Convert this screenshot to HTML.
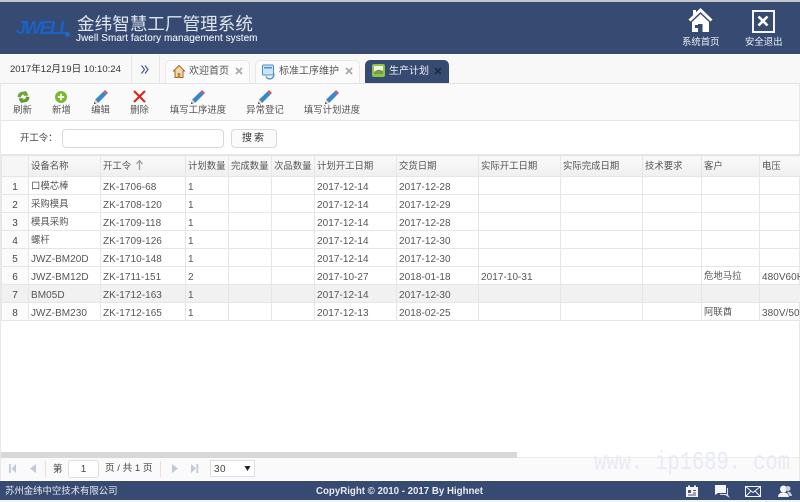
<!DOCTYPE html>
<html lang="zh"><head><meta charset="utf-8"><title>金纬智慧工厂管理系统</title>
<style>
html,body{margin:0;padding:0;background:#fff}
body{width:800px;height:502px;overflow:hidden;position:relative;font-family:"Liberation Sans","Noto Sans CJK SC",sans-serif;font-size:10px;color:#444}
#w{position:absolute;left:0;top:0;width:800px;height:502px;overflow:hidden;filter:blur(.35px)}
.a{position:absolute;white-space:nowrap}
svg{position:absolute;overflow:visible}
table{position:absolute;left:1px;top:155px;width:799px;border-collapse:collapse;table-layout:fixed}
td,th{border:1px solid #e6e6e6;height:15px;padding:2px 0 0 2px;font-weight:normal;font-size:10px;line-height:13px;vertical-align:top;text-align:left;white-space:nowrap;overflow:hidden;color:#555;letter-spacing:.05px}
td::before,th::before{content:"\200b";font-family:"Noto Sans CJK SC",sans-serif}
th{height:17px;padding-top:3px;background:linear-gradient(#fafafa,#efefef);font-size:9.4px;letter-spacing:0}
td.c{font-size:9.4px;letter-spacing:0}
td:first-child{text-align:center;background:#fbfbfb;padding:2px 0 0 0;font-size:10px;color:#444}
th:first-child{background:#f6f6f6}
tr.s td{background:#f1f1f1}
.tb{position:absolute;top:103px;color:#555;font-size:9.4px;line-height:14px;white-space:nowrap;transform:translateX(-50%)}
.tab{position:absolute;top:60px;height:23px;border:1px solid #e8e8e8;border-bottom:0;border-radius:5px 5px 0 0;background:#fbfbfb;box-sizing:border-box}
</style></head><body><div id="w">
<!-- header -->
<div class="a" style="left:0;top:0;width:800px;height:2px;background:#c4c6cb"></div>
<div class="a" style="left:0;top:2px;width:800px;height:52px;background:#364a72"></div>
<div class="a" style="left:16px;top:18px;font:italic bold 18px 'Liberation Sans',sans-serif;color:#1a62c4;letter-spacing:-1.7px">JWELL</div>
<div class="a" style="left:65px;top:32px;width:5px;height:5px;border-radius:50%;background:#2368b8"></div>
<div class="a" style="left:77px;top:13px;font-size:17.6px;line-height:22px;color:#dfe4ee;font-family:'WenQuanYi Zen Hei','Noto Sans CJK SC',sans-serif">金纬智慧工厂管理系统</div>
<div class="a" style="left:76px;top:33px;font-size:10px;line-height:12px;color:#eceff4;letter-spacing:.04px;-webkit-text-stroke:.1px #eceff4">Jwell Smart factory management system</div>
<svg style="left:688px;top:8px" width="25" height="25" viewBox="0 0 25 25"><path d="M12.5 0 L24.5 11.5 L22.5 13.5 L12.5 4 L2.5 13.5 L.5 11.5 L5 7.2 V2 H8 V4.3 Z" fill="#fff"/><path d="M4 14 L12.5 6 L21 14 V24 H14.5 V16 H10 V24 H4 Z M7 17 H10 V20 H7 Z" fill="#fff" fill-rule="evenodd"/></svg>
<div class="a" style="left:682px;top:35px;font-size:9.4px;line-height:13px;color:#eef0f5">系统首页</div>
<div class="a" style="left:752px;top:10px;width:19px;height:19px;border:2px solid #f4f5f8"></div>
<svg style="left:756px;top:14px" width="15" height="15" viewBox="0 0 15 15"><path d="M2.5 2.5 L11.5 11.5 M11.5 2.5 L2.5 11.5" stroke="#fff" stroke-width="2.6"/></svg>
<div class="a" style="left:745px;top:35px;font-size:9.4px;line-height:13px;color:#eef0f5">安全退出</div>
<!-- tab bar -->
<div class="a" style="left:0;top:55px;width:800px;height:28px;background:#f8f8f8"></div>
<div class="a" style="left:0;top:83px;width:800px;height:1px;background:#e4e4e4"></div>
<div class="a" style="left:131px;top:55px;width:1px;height:28px;background:#e6e6e6"></div>
<div class="a" style="left:159px;top:55px;width:1px;height:28px;background:#e6e6e6"></div>
<div class="a" style="left:10px;top:63px;font-size:9.55px;line-height:14px;color:#333">2017年12月19日 10:10:24</div>
<svg style="left:141px;top:65px" width="8" height="9" viewBox="0 0 8 9"><path d="M.5 .5 L3.5 4.5 L.5 8.5 M4 .5 L7 4.5 L4 8.5" fill="none" stroke="#3a5684" stroke-width="1.1"/></svg>
<div class="tab" style="left:165px;width:85px"></div>
<svg style="left:173px;top:65px" width="12" height="13" viewBox="0 0 12 13"><path d="M6 .5 L.5 6 L2 6 V12.5 H10 V6 H11.5 Z" fill="#eed9a8" stroke="#a5642c" stroke-width="1"/><path d="M4.7 12.5 V8 H7.3 V12.5" fill="#c8813c"/></svg>
<div class="a" style="left:189px;top:65px;font-size:10px;line-height:14px;color:#555">欢迎首页</div>
<svg style="left:235px;top:67px" width="8" height="8" viewBox="0 0 8 8"><path d="M1 1 L7 7 M7 1 L1 7" stroke="#a9a9a9" stroke-width="1.7"/></svg>
<div class="tab" style="left:255px;width:105px"></div>
<svg style="left:262px;top:64px" width="13" height="14" viewBox="0 0 13 14"><rect x=".5" y="1" width="11" height="10" rx="1" fill="#cfe3f5" stroke="#4a90d0"/><rect x="2" y="3" width="8" height="1.5" fill="#4a90d0"/><path d="M4 12.5 A4 4 0 0 0 11.5 9" fill="none" stroke="#4a90d0" stroke-width="1.4"/></svg>
<div class="a" style="left:279px;top:65px;font-size:10px;line-height:14px;color:#555">标准工序维护</div>
<svg style="left:345px;top:67px" width="8" height="8" viewBox="0 0 8 8"><path d="M1 1 L7 7 M7 1 L1 7" stroke="#a9a9a9" stroke-width="1.7"/></svg>
<div class="a" style="left:365px;top:60px;width:84px;height:23px;background:#364a72;border-radius:5px 5px 0 0"></div>
<svg style="left:372px;top:64px" width="13" height="13" viewBox="0 0 13 13"><rect x="0" y="0" width="13" height="13" rx="2" fill="#8cc63f"/><rect x="2" y="2" width="9" height="8" fill="#f3f3e3"/><path d="M2 8 Q6 4 11 7 V10 H2 Z" fill="#7a9a4a"/></svg>
<div class="a" style="left:389px;top:65px;font-size:10px;line-height:14px;color:#eef0f5">生产计划</div>
<svg style="left:434px;top:67px" width="8" height="8" viewBox="0 0 8 8"><path d="M1 1 L7 7 M7 1 L1 7" stroke="#1f2c45" stroke-width="1.7"/></svg>
<!-- toolbar -->
<div class="a" style="left:1px;top:84px;width:798px;height:36px;background:#fafafa"></div>
<div class="a" style="left:0;top:120px;width:800px;height:1px;background:#e6e6e6"></div>
<div class="a" style="left:0;top:84px;width:1px;height:400px;background:#e8e8e8"></div>
<div class="a" style="left:799px;top:84px;width:1px;height:400px;background:#e8e8e8"></div>
<svg style="left:17px;top:91px" width="13" height="12" viewBox="0 0 13 12"><path d="M.5 6 Q1 .5 7 .5 L9 0 L11.5 4.5 L6.5 5 L7.5 3.5 Q4 3.5 4 6.5 Z" fill="#6da53a"/><path d="M12.5 6 Q12 11.5 6 11.5 L4 12 L1.5 7.5 L6.5 7 L5.5 8.5 Q9 8.5 9 5.5 Z" fill="#5b9a2e"/></svg>
<div class="tb" style="left:22.5px">刷新</div>
<svg style="left:55px;top:91px" width="12" height="12" viewBox="0 0 12 12"><circle cx="6" cy="6" r="6" fill="#7ab82e"/><path d="M6 2.8 V9.2 M2.8 6 H9.2" stroke="#fff" stroke-width="1.8"/></svg>
<div class="tb" style="left:61.5px">新增</div>
<svg style="left:94px;top:90px" width="14" height="14" viewBox="0 0 14 14"><path d="M0 14 L1.2 9.5 L9.5 1.5 L12.5 4.5 L4.4 12.7 Z" fill="#3b86d0"/><path d="M0 14 L1.2 9.5 L4.4 12.7 Z" fill="#ecd7ae"/><path d="M0 14 L.5 12 L2 13.5 Z" fill="#333"/><path d="M9.5 1.5 L11 0 L14 3 L12.5 4.5 Z" fill="#d9534f"/></svg>
<div class="tb" style="left:100.5px">编辑</div>
<svg style="left:133px;top:90px" width="13" height="13" viewBox="0 0 13 13"><path d="M1 1 L12 12 M12 1 L1 12" stroke="#d62a20" stroke-width="2.2"/></svg>
<div class="tb" style="left:139.5px">删除</div>
<svg style="left:191px;top:90px" width="14" height="14" viewBox="0 0 14 14"><path d="M0 14 L1.2 9.5 L9.5 1.5 L12.5 4.5 L4.4 12.7 Z" fill="#3b86d0"/><path d="M0 14 L1.2 9.5 L4.4 12.7 Z" fill="#ecd7ae"/><path d="M0 14 L.5 12 L2 13.5 Z" fill="#333"/><path d="M9.5 1.5 L11 0 L14 3 L12.5 4.5 Z" fill="#d9534f"/></svg>
<div class="tb" style="left:198px">填写工序进度</div>
<svg style="left:258px;top:90px" width="14" height="14" viewBox="0 0 14 14"><path d="M0 14 L1.2 9.5 L9.5 1.5 L12.5 4.5 L4.4 12.7 Z" fill="#3b86d0"/><path d="M0 14 L1.2 9.5 L4.4 12.7 Z" fill="#ecd7ae"/><path d="M0 14 L.5 12 L2 13.5 Z" fill="#333"/><path d="M9.5 1.5 L11 0 L14 3 L12.5 4.5 Z" fill="#d9534f"/></svg>
<div class="tb" style="left:265px">异常登记</div>
<svg style="left:325px;top:90px" width="14" height="14" viewBox="0 0 14 14"><path d="M0 14 L1.2 9.5 L9.5 1.5 L12.5 4.5 L4.4 12.7 Z" fill="#3b86d0"/><path d="M0 14 L1.2 9.5 L4.4 12.7 Z" fill="#ecd7ae"/><path d="M0 14 L.5 12 L2 13.5 Z" fill="#333"/><path d="M9.5 1.5 L11 0 L14 3 L12.5 4.5 Z" fill="#d9534f"/></svg>
<div class="tb" style="left:332px">填写计划进度</div>
<!-- search -->
<div class="a" style="left:20px;top:131px;font-size:9.4px;line-height:14px;color:#444">开工令：</div>
<div class="a" style="left:62px;top:129px;width:162px;height:19px;box-sizing:border-box;border:1px solid #d8d8d8;border-radius:4px;background:#fff"></div>
<div class="a" style="left:231px;top:129px;width:46px;height:19px;box-sizing:border-box;border:1px solid #d8d8d8;border-radius:4px;background:#fbfbfb;text-align:center;font-size:10px;line-height:17px;letter-spacing:2px;color:#333">搜索</div>
<!-- grid -->
<div class="a" style="left:0;top:154px;width:800px;height:1px;background:#e6e6e6"></div>
<table>
<colgroup><col style="width:27px"><col style="width:72px"><col style="width:85px"><col style="width:43px"><col style="width:43px"><col style="width:43px"><col style="width:82px"><col style="width:82px"><col style="width:82px"><col style="width:82px"><col style="width:59px"><col style="width:58px"><col style="width:41px"></colgroup>
<tr><th></th><th>设备名称</th><th>开工令</th><th>计划数量</th><th>完成数量</th><th>次品数量</th><th>计划开工日期</th><th>交货日期</th><th>实际开工日期</th><th>实际完成日期</th><th>技术要求</th><th>客户</th><th>电压</th></tr>
<tr><td>1</td><td class="c">口模芯棒</td><td>ZK-1706-68</td><td>1</td><td></td><td></td><td>2017-12-14</td><td>2017-12-28</td><td></td><td></td><td></td><td></td><td></td></tr>
<tr><td>2</td><td class="c">采购模具</td><td>ZK-1708-120</td><td>1</td><td></td><td></td><td>2017-12-14</td><td>2017-12-29</td><td></td><td></td><td></td><td></td><td></td></tr>
<tr><td>3</td><td class="c">模具采购</td><td>ZK-1709-118</td><td>1</td><td></td><td></td><td>2017-12-14</td><td>2017-12-28</td><td></td><td></td><td></td><td></td><td></td></tr>
<tr><td>4</td><td class="c">螺杆</td><td>ZK-1709-126</td><td>1</td><td></td><td></td><td>2017-12-14</td><td>2017-12-30</td><td></td><td></td><td></td><td></td><td></td></tr>
<tr><td>5</td><td>JWZ-BM20D</td><td>ZK-1710-148</td><td>1</td><td></td><td></td><td>2017-12-14</td><td>2017-12-30</td><td></td><td></td><td></td><td></td><td></td></tr>
<tr><td>6</td><td>JWZ-BM12D</td><td>ZK-1711-151</td><td>2</td><td></td><td></td><td>2017-10-27</td><td>2018-01-18</td><td>2017-10-31</td><td></td><td></td><td class="c">危地马拉</td><td>480V60HZ</td></tr>
<tr class="s"><td>7</td><td>BM05D</td><td>ZK-1712-163</td><td>1</td><td></td><td></td><td>2017-12-14</td><td>2017-12-30</td><td></td><td></td><td></td><td></td><td></td></tr>
<tr><td>8</td><td>JWZ-BM230</td><td>ZK-1712-165</td><td>1</td><td></td><td></td><td>2017-12-13</td><td>2018-02-25</td><td></td><td></td><td></td><td class="c">阿联酋</td><td>380V/50HZ</td></tr>
</table>
<svg style="left:136px;top:160px" width="7" height="10" viewBox="0 0 7 10"><path d="M3.5 10 V1 M.5 4 L3.5 .5 L6.5 4" fill="none" stroke="#999" stroke-width="1.2"/></svg>
<!-- scrollbar -->
<div class="a" style="left:1px;top:452px;width:516px;height:6px;background:#d8d8d8"></div>
<div class="a" style="left:517px;top:457px;width:282px;height:1px;background:#ececec"></div>
<!-- pager -->
<div class="a" style="left:1px;top:458px;width:798px;height:22px;background:#fafafa"></div>
<svg style="left:9px;top:464px" width="60" height="10" viewBox="0 0 60 10"><path d="M0 0 H1.8 V9 H0 Z M7 0 V9 L2.5 4.5 Z" fill="#c3cbd6"/><path d="M27 0 V9 L21 4.5 Z" fill="#c3cbd6"/></svg>
<div class="a" style="left:45px;top:461px;width:1px;height:16px;background:#e2e2e2"></div>
<div class="a" style="left:53px;top:462px;font-size:9.4px;line-height:14px;color:#444">第</div>
<div class="a" style="left:68px;top:460px;width:31px;height:18px;box-sizing:border-box;border:1px solid #e0e0e0;border-radius:3px;background:#fff;text-align:center;font-size:10px;line-height:17px;color:#444">1</div>
<div class="a" style="left:105px;top:462px;font-size:9.6px;line-height:14px;color:#444">页 / 共 1 页</div>
<div class="a" style="left:160px;top:461px;width:1px;height:16px;background:#e2e2e2"></div>
<svg style="left:172px;top:464px" width="28" height="10" viewBox="0 0 28 10"><path d="M0 0 L6 4.5 L0 9 Z" fill="#c3cbd6"/><path d="M19 0 L24 4.5 L19 9 Z M24.5 0 H26.3 V9 H24.5 Z" fill="#c3cbd6"/></svg>
<div class="a" style="left:210px;top:460px;width:45px;height:17px;box-sizing:border-box;border:1px solid #e0e0e0;background:#fff;font-size:10px;line-height:17px;color:#444;padding-left:3px;letter-spacing:.4px">30</div>
<svg style="left:244px;top:466px" width="7" height="5" viewBox="0 0 7 5"><path d="M.5 0 H6.5 L3.5 5 Z" fill="#222"/></svg>
<!-- watermark -->
<div class="a" style="left:594px;top:449px;font:26px/26px 'Liberation Mono',monospace;color:#e8ebf5;transform:scaleX(.785);transform-origin:0 0">www. ip1689. com</div>
<!-- footer -->
<div class="a" style="left:0;top:481px;width:800px;height:19px;background:#364a72"></div>
<div class="a" style="left:0;top:500px;width:800px;height:2px;background:#f3f4f6"></div>
<div class="a" style="left:5px;top:484px;font-size:9.4px;line-height:13px;color:#e8ebf1">苏州金纬中空技术有限公司</div>
<div class="a" style="left:316px;top:485px;font-size:9.7px;line-height:13px;font-weight:bold;color:#e8ebf1">CopyRight © 2010 - 2017 By Highnet</div>
<svg style="left:685px;top:485px" width="14" height="12" viewBox="0 0 14 12"><path d="M1 2 H3 V.5 H5 V2 H9 V.5 H11 V2 H13 V12 H1 Z" fill="#f2f4f7"/><rect x="3" y="5" width="3" height="3" fill="#556"/><path d="M8 5.5 H11 M8 8 H11 M3 10 H11" stroke="#556"/></svg>
<svg style="left:714px;top:485px" width="16" height="13" viewBox="0 0 16 13"><path d="M1 0 H12 V8 H4 L1 10 Z" fill="#f2f4f7"/><path d="M13 3 H14 V10 L16 13 L11 10 H6 V9 H13 Z" fill="#d5dae3"/></svg>
<svg style="left:745px;top:486px" width="16" height="11" viewBox="0 0 16 11"><rect x=".5" y=".5" width="15" height="10" fill="none" stroke="#f2f4f7"/><path d="M.5 .5 L8 6.5 L15.5 .5 M.5 10.5 L6 5 M15.5 10.5 L10 5" fill="none" stroke="#f2f4f7"/></svg>
<svg style="left:778px;top:485px" width="14" height="13" viewBox="0 0 14 13"><circle cx="5.5" cy="4" r="3.5" fill="#f2f4f7"/><path d="M0 12 Q0 7.5 5.5 7.5 Q10.5 7.5 11 12 Z" fill="#f2f4f7"/><circle cx="10" cy="3.5" r="2.5" fill="#c8cfda"/><path d="M9 6.5 Q13.5 6.5 14 11 H11.5 Z" fill="#c8cfda"/></svg>
</div></body></html>
